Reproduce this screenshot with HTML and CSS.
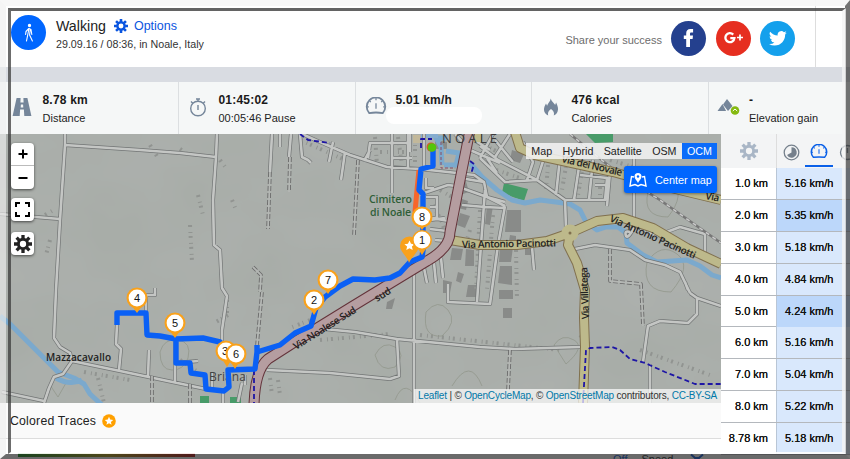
FILE: index.html
```
<!DOCTYPE html>
<html lang="en">
<head>
    <meta charset="UTF-8">
    <meta name="viewport" content="width=device-width, initial-scale=1.0">
    <title>Walking - 29.09.16 / 08:36, in Noale, Italy</title>
    <link rel="stylesheet" href="styles.css">
</head>
<body>

<svg class="defs" width="0" height="0">
    <defs>
        <symbol id="gear" viewBox="0 0 24 24">
            <circle cx="12" cy="12" r="6.2" fill="none" stroke="currentColor" stroke-width="4"/>
            <path d="M12 0v5M12 19v5M0 12h5M19 12h5M3.5 3.5l3.6 3.6M16.9 16.9l3.6 3.6M20.5 3.5l-3.6 3.6M7.1 16.9l-3.6 3.6" stroke="currentColor" stroke-width="4.4"/>
        </symbol>
        <symbol id="gauge" viewBox="0 0 24 20">
            <path d="M4.5 17.8A10.3 10.3 0 1 1 19.5 17.8Q12 16.6 4.5 17.8z" fill="none" stroke="currentColor" stroke-width="2" stroke-linejoin="round"/>
            <path d="M12 7v6M12 1v2.500M2 11h2M20 11h2M5 4.500l1.200 1.200M19 4.500l-1.200 1.200" stroke="currentColor" stroke-width="1.400"/>
        </symbol>
    </defs>
</svg>

<div class="page">
    <header class="header">
        <div class="sport-icon">
            <svg width="14" height="20" viewBox="0 0 14 20" fill="none" stroke="#fff" stroke-width="1.1" stroke-linecap="round" stroke-linejoin="round">
                <circle cx="7.500" cy="2.500" r="1.100" fill="#fff"/>
                <path d="M7 5.500L5.800 11.500L4.500 18M7 5.500l2 1 .8 5M6.800 5.500L4 8.500l-.4 3M8.200 7l-.6 5 2.800 6"/>
            </svg>
        </div>
        <div class="title">
            <div class="title-row">
                <h1>Walking</h1>
                <svg class="gear-blue" width="14" height="14"><use href="#gear"/></svg>
                <a class="options">Options</a>
            </div>
            <p class="date">29.09.16 / 08:36, in Noale, Italy</p>
        </div>
        <div class="share">
            <span class="share-text">Share your success</span>
            <span class="social facebook">
                <svg width="12" height="20" viewBox="0 0 12 20"><path fill="#fff" d="M3.200 19V11H.8V7.600h2.400V5.300C3.200 2.600 4.600 1 7.400 1h2.700v3.400H8.400c-1 0-1.400.5-1.400 1.400v1.800h3L9.600 11H7v8z"/></svg>
            </span>
            <span class="social google">
                <svg width="20" height="14" viewBox="0 0 20 14" fill="none" stroke="#fff"><path stroke-width="2.300" d="M9.200 3.600A4.500 4.500 0 1 0 10.400 7.200H6.300"/><path stroke-width="1.700" d="M13 6.500h6M16 3.500v6"/></svg>
            </span>
            <span class="social twitter">
                <svg width="18" height="18" viewBox="0 0 24 24"><path fill="#fff" d="M23.600 4.900a9 9 0 0 1-2.700.8 4.800 4.800 0 0 0 2.100-2.700c-.9.600-2 1-3.100 1.200a4.900 4.900 0 0 0-8.300 4.500A13.800 13.800 0 0 1 1.600 3.600a4.900 4.900 0 0 0 1.500 6.500c-.8 0-1.500-.2-2.200-.6v.1a4.900 4.900 0 0 0 3.900 4.800c-.7.200-1.500.2-2.200.1a4.900 4.900 0 0 0 4.600 3.400A9.800 9.800 0 0 1 0 19.900a13.900 13.900 0 0 0 7.500 2.200c9.100 0 14.300-7.700 14-14.700a10 10 0 0 0 2.100-2.500z"/></svg>
            </span>
        </div>
    </header>

    <section class="stats">
        <div class="stat first">
            <svg class="stat-icon" width="20" height="20" viewBox="0 0 20 20"><path fill="#75869a" d="M4.600 1h4l-.2 4.500h3.200L11.400 1h4l4 18h-7.100l-.4-6.500H8.100L7.700 19H.6zM8.900 7.500l-.2 3h2.600l-.2-3z"/></svg>
            <div><b>8.78 km</b><span>Distance</span></div>
        </div>
        <div class="stat">
            <svg class="stat-icon" width="20" height="20" viewBox="0 0 20 20" fill="none" stroke="#75869a" stroke-width="1.400"><circle cx="10" cy="11.500" r="7.300"/><path d="M10 8v5M8 2h4M10 2v2.500M3 4.500l2 2M17 4.500l-2 2"/></svg>
            <div><b>01:45:02</b><span>00:05:46 Pause</span></div>
        </div>
        <div class="stat speed">
            <svg class="stat-icon" width="22" height="18"><use href="#gauge"/></svg>
            <div><b>5.01 km/h</b><i class="blank"></i></div>
        </div>
        <div class="stat">
            <svg class="stat-icon" width="20" height="20" viewBox="0 0 20 20"><path fill="#75869a" d="M9.800 1.500c.8 3.500 3.600 4.600 4.300 6.400l1-2.400c1.600 3.600 2.600 6 1.500 9-.6 1.900-2 3.200-3.800 4 .7-2.600 0-4.300-2.800-6.500-2.800 2.200-3.500 3.900-2.800 6.500-2.500-1-4-3-4.200-5.400-.2-2.600 1-4.600 2-6.600l1.100 2.200C6.500 6.500 9.200 5 9.800 1.500z"/></svg>
            <div><b>476 kcal</b><span>Calories</span></div>
        </div>
        <div class="stat last">
            <svg class="stat-icon" width="23" height="20" viewBox="0 0 23 20"><path fill="#75869a" d="M.5 14L5.500 7l3.600 7zM6 7.500L10 2l5.500 7-4.500 5z"/><circle cx="18" cy="13.500" r="4.300" fill="#84b90f"/><path d="M15.800 14l2.200-2 2.200 2" fill="none" stroke="#fff"/></svg>
            <div><b>-</b><span>Elevation gain</span></div>
        </div>
    </section>

    <div class="content">
        <main class="left">
            <div class="map">
                <svg class="map-svg" width="721" height="269" viewBox="0 134 721 269">
                    <defs>
                        <filter id="relief" x="0" y="0" width="100%" height="100%">
                            <feTurbulence type="fractalNoise" baseFrequency="0.012 0.016" numOctaves="3" seed="8"/>
                            <feColorMatrix values="0 0 0 0 .45  0 0 0 0 .46  0 0 0 0 .46  .6 0 0 0 -.12"/>
                        </filter>
                        <path id="roads" d="M65 134v11L60 220L56 290L54 338L60 347L70 353L72 361L63 374L54 377L49 388L44 403M2 392L44 401M72 361L120 371L206 389
                            M65 145L140 150L180 153L216 157M217 134L216 157L213 200L214 245L220 250L222 288L227 296L222 330V345M0 214L60 219
                            M146 314V295H155V288M117 325L116 344L121 349L119 370M149 350L148 376M175 340V383M176 363L198 361
                            M272 134L270 172M280 134V147M291 134L289 157M300 134L302 157L308 160L311 163
                            M302 134L320 142L350 155L387 167L420 169L457 173L474 175L484 182L487 197L505 202M333 142L329 162M345 152L341 180M368 158L370 143H407M370 150L364 161M392 134V193M392 158H412M408 134V170M424 134V168M410 134V152
                            M460 178L484 182M426 178V188H434M424 193L448 185L456 186L487 197L505 206M426 197H437V218H428M430 207H437M430 220L445 218M437 219L449 221M430 229L447 231M435 240L447 241M414 267V403M427 257L442 255
                            M424 268L427 283M434 263L436 283M441 258L443 278M485 190L481 245L477 302M505 206L498 245L490 304L448 302V284M462 205L485 207L505 208
                            M480 158L505 182L537 180L565 200L566 228M493 134L480 158M480 146L498 160L537 180M497 173L487 158M513 162L495 140M510 134L495 157M523 142L533 162L527 180M545 155L537 180M560 158L556 195M580 160L574 200M593 160L589 200M565 200L605 200L607 178L580 175M610 172L607 206M595 185H607
                            M634 150V228M634 228Q628 239 626 236Q624 230 630 232M656 236L680 227L705 234V260M656 236L640 228
                            M575 249L595 245L630 250L645 260L665 265L680 272L690 293M690 293L697 298L721 306M697 298V314L688 323L660 321L648 326L643 362M650 364V403M532 247L534 270M688 290L685 282
                            M314 328L355 332L397 339L480 347L515 349L580 347M397 339L399 376L390 379L330 373L267 370
                            M414 330V340M455 134L470 150L500 163M465 134L490 150M245 385V375M238 402L242 383M212 372V388M223 390V403"/>
                    </defs>
                    <rect y="134" width="721" height="269" fill="#a8ada8"/>
                    <rect y="134" width="721" height="269" filter="url(#relief)"/>

                    <!-- fields and buildings -->
                    <path fill="#489b69" d="M504 183L528 189L524 201L502 193zM586 134H613V142L595 143zM230 397H241V403H230zM200 396H209V403H200z"/>
                    <path fill="#898b89" d="M457 180L465 178L469 192L460 195zM456 197L468 201L466 210L454 207zM460 213L470 216L465 228L457 225zM507 210H521V232H505zM510 235L516 236V241H509zM500 248L513 247L511 262H499zM500 266L512 266V285L498 283zM499 290H513V299H499zM503 308H512V318H503zM487 206L493 206L490 225L485 224zM452 248L463 249L461 260H450zM466 249L474 250V266H465zM443 280L452 282L450 293H443zM468 285H478V297H466zM458 272L464 274L461 283L456 281zM387 302L395 298L392 309H386zM435 140L447 142V149H435zM512 150L524 154L520 163L510 160zM525 248H531V255H525z"/>
                    <path class="houses" d="M300 140L345 160M375 137L377 165M398 137L402 165M415 138V168M380 152H405M448 165L470 170M474 140L500 153M496 170L520 178M548 165L546 190M567 160L562 190M583 165L578 195M600 165V195M440 190L452 197M433 205L442 222M443 226L450 243M470 230L465 246M516 250L517 300M480 210L476 290M493 215L487 290M228 315L216 322M227 300V318M150 145L158 158M180 149L187 154M198 195L203 215M220 160L226 168M190 225L192 262M50 240L46 255M45 215L52 211M232 200L236 210M420 335L560 350M320 340L390 334M580 335L590 345M640 350L710 375M610 160L650 172M180 360L198 372M84 372L130 380M98 378L104 403M270 378L272 395M278 380L280 395M310 320L290 328"/>
                    <g fill="none" stroke="#92978b" stroke-width=".8">
                        <path d="M160 352q4-14 18-12t10 18q-4 12-16 12t-12-18zM375 355q8-15 20-8t0 20q-15 6-20-12zM426 312q12-14 22-2t-6 26q-20 2-16-24zM647 262q14-20 30-8t-6 38q-30 0-24-30zM554 345q8-12 20-5t-8 24zM648 192q10-22 24-10t-4 35q-26 0-20-25zM395 400q10-25 25 3M452 386q18-30 30 0M50 385l8 12 8-14"/>
                    </g>

                    <!-- rivers -->
                    <g fill="none" stroke="#7ba9cd" stroke-width="5" stroke-linejoin="round">
                        <path d="M0 316L10 324L40 354L58 372L74 378L84 384L90 394L103 406M56 378Q70 386 82 380"/>
                        <path d="M470 163L482 177L497 190L512 200L525 203L540 200L556 202L570 204L580 210L586 222L597 230L606 227L618 227L626 233L627 243L643 255L657 262L687 260L700 266L712 275L721 278"/>
                        <path d="M434 134L441 147L442 165M444 165H456L459 153L446 151M438 138H447"/>
                    </g>
                    <path fill="#86add0" d="M421 134H438V138H421z"/>

                    <!-- minor roads -->
                    <use href="#roads" class="road-case"/>
                    <use href="#roads" class="road-fill"/>
                    <path class="track-case" d="M270 172L268 229M290 157L289 192M358 160L354 235M262 292L257 345M253 267L261 275L260 292M152 376V403M190 384V403M610 249V281L641 284L643 326M510 350L508 390"/>
                    <path class="track" d="M270 172L268 229M290 157L289 192M358 160L354 235M262 292L257 345M253 267L261 275L260 292M152 376V403M190 384V403M610 249V281L641 284L643 326M510 350L508 390"/>
                    <path d="M570 134L620 175L660 200L721 243" fill="none" stroke="#777" stroke-width="2.500"/>
                    <path d="M570 134L620 175L660 200L721 243" fill="none" stroke="#c9c9c9" stroke-width="1.500" stroke-dasharray="4 4"/>

                    <!-- secondary roads -->
                    <path class="sec-case" d="M450 240L480 245L517 245L547 241L570 233L597 221L623 218L653 228L687 248L721 264M570 233L568 245L577 263L585 290L584 318L585 347L583 403M515 132L520 148L535 155L613 172L667 187L721 200M477 132V142"/>
                    <path class="sec-fill" d="M450 240L480 245L517 245L547 241L570 233L597 221L623 218L653 228L687 248L721 264M570 233L568 245L577 263L585 290L584 318L585 347L583 403M515 132L520 148L535 155L613 172L667 187L721 200M477 132V142"/>
                    <circle cx="570" cy="233" r="8.500" fill="#bdb98b"/>
                    <circle cx="570" cy="233" r="1.500" fill="#80704e"/>
                    <rect x="413" y="135" width="7" height="8" fill="#c2b89a"/>

                    <!-- Via Noalese -->
                    <path class="main-case" d="M470 130L461 175L450 232Q450 248 427 261L353 306L293 343L268 359Q255 370 254 405"/>
                    <path class="main-fill" d="M470 130L461 175L450 232Q450 248 427 261L353 306L293 343L268 359Q255 370 254 405"/>
                    <path class="dashed" d="M254 370L254 403M300 134L308 140L330 143M421 148V139H432M470 161L474 164L471 174M583 403L586 350L590 348L612 347L620 350L630 359L645 363L665 372L695 384L721 384"/>
                    <path d="M441 142V168H455" fill="none" stroke="#8a4a60" stroke-width="1" stroke-dasharray="3 2"/>

                    <!-- labels -->
                    <g class="label">
                        <text x="442" y="142.500" class="town" textLength="55">NOALE</text>
                        <text x="369" y="203" class="green" textLength="43">Cimitero</text>
                        <text x="370" y="216" class="green" textLength="41">di Noale</text>
                        <text x="46" y="361" textLength="65">Mazzacavallo</text>
                        <text x="209" y="381" class="village" textLength="37">Briana</text>
                        <text transform="translate(462 248) rotate(-1)" textLength="94">Via Antonio Pacinotti</text>
                        <text transform="translate(561 162) rotate(13)" textLength="62">Via dei Novale</text>
                        <text transform="translate(705 199) rotate(10)" textLength="14">Via</text>
                        <text transform="translate(609 221) rotate(24)" textLength="93">Via Antonio Pacinotti</text>
                        <text transform="translate(589 319) rotate(-92)" textLength="52">Via Villatega</text>
                        <text transform="translate(296 350) rotate(-32)" textLength="72">Via Noalese Sud</text>
                        <text transform="translate(377 302) rotate(-32)">sud</text>
                    </g>

                    <!-- recorded track -->
                    <path d="M419 170L417 190L415 212" fill="none" stroke="#f7662a" stroke-width="5"/>
                    <path d="M433 149V166L421 169L419 190L423 194V250L422 257L410 262L400 273L390 278L375 280L353 279L340 286L325 297L316 308L311 326L295 333L280 345L257 352L255 369L228 370L229 387L224 391L206 389L205 375L191 373L190 363H176V338M257 352V345M228 350L220 342L203 338L176 339L160 336L147 335L146 313H117V325" class="route"/>
                    <circle cx="431" cy="147" r="4.500" fill="#d35b2c"/>
                    <circle cx="432" cy="147.500" r="4.300" fill="#53c60a"/>

                    <g class="pins">
                        <path d="M409 263C408 257 400 252 400 246a9.500 9.500 0 0 1 19 0C419 252 411 257 409 263z"/>
                        <path fill="#fff" d="M409.500 240.500l1.500 3.300 3.600.4-2.700 2.400.8 3.500-3.200-1.800-3.200 1.800.8-3.500-2.700-2.400 3.600-.4z"/>
                        <path d="M422 230l-5-7h10z"/><circle cx="422" cy="217" r="10.500"/><circle cx="422" cy="217" r="8.400" fill="#fff"/><text x="422" y="221">8</text>
                        <path d="M422 255l-5-8h10z"/><circle cx="422" cy="240" r="10"/><circle cx="422" cy="240" r="8.400" fill="#fff"/><text x="422" y="244">1</text>
                        <path d="M328 294l-5-7h10z"/><circle cx="328" cy="280" r="10.500"/><circle cx="328" cy="280" r="8.400" fill="#fff"/><text x="328" y="284">7</text>
                        <path d="M314 315l-5-8h10z"/><circle cx="314" cy="300" r="10.500"/><circle cx="314" cy="300" r="8.400" fill="#fff"/><text x="314" y="304">2</text>
                        <path d="M137 313l-5-7h10z"/><circle cx="137" cy="298" r="10.500"/><circle cx="137" cy="298" r="8.400" fill="#fff"/><text x="137" y="302">4</text>
                        <path d="M175 338l-5-7h10z"/><circle cx="175" cy="323" r="10.500"/><circle cx="175" cy="323" r="8.400" fill="#fff"/><text x="175" y="327">5</text>
                        <path d="M227 367l-5-8h10z"/><circle cx="226" cy="351" r="10.500"/><circle cx="226" cy="351" r="8.400" fill="#fff"/><text x="225" y="355">3</text>
                        <path d="M235 369l-5-8h10z"/><circle cx="236" cy="354" r="10.500"/><circle cx="236" cy="354" r="8.400" fill="#fff"/><text x="236" y="358">6</text>
                    </g>
                </svg>

                <div class="map-controls">
                    <div class="zoom">
                        <div class="btn plus"><svg width="10" height="10"><path d="M5 .5v9M.5 5h9" stroke="#000" stroke-width="2"/></svg></div>
                        <div class="btn"><svg width="10" height="10"><path d="M.5 5h9" stroke="#000" stroke-width="2"/></svg></div>
                    </div>
                    <div class="btn single"><svg width="15" height="15" viewBox="0 0 15 15" fill="none" stroke="#000" stroke-width="2"><path d="M1 5V1h4M10 1h4v4M14 10v4h-4M5 14H1v-4"/></svg></div>
                    <div class="btn single"><svg width="18" height="18"><use href="#gear"/></svg></div>
                </div>

                <div class="map-right">
                    <div class="layers">
                        <span>Map</span><span>Hybrid</span><span>Satellite</span><span>OSM</span><span class="active">OCM</span>
                    </div>
                    <div class="center-map">
                        <svg width="18" height="16" viewBox="0 0 18 16" fill="none" stroke="#fff" stroke-width="1.400"><path d="M5 5L2.500 4.500 1 14l5-1.500 3 1.500 3-1.500 5 1.500-1.500-9.500L13 5"/><path fill="#fff" stroke="none" d="M9 11C8 8.500 5.500 7 5.500 4.500a3.500 3.500 0 0 1 7 0C12.500 7 10 8.500 9 11z"/><circle cx="9" cy="4.500" r="1.200" fill="#06f" stroke="none"/></svg>
                        <span>Center map</span>
                    </div>
                </div>
                <div class="attribution"><a>Leaflet</a> | © <a>OpenCycleMap</a>, © <a>OpenStreetMap</a> contributors, <a>CC-BY-SA</a></div>
            </div>

            <div class="traces">
                <span>Colored Traces</span>
                <svg width="14" height="14" viewBox="0 0 14 14"><circle cx="7" cy="7" r="6.800" fill="#ffa000"/><path fill="#fff" d="M7 2.800l1.200 2.800 3 .3-2.300 2 .7 2.900L7 9.300l-2.600 1.500.7-2.900-2.300-2 3-.3z"/></svg>
            </div>
            <div class="chart-head">
                <div class="scale"></div>
                <a class="off">Off</a>
                <span>Speed</span>
                <svg width="14" height="10" viewBox="0 0 14 10"><path d="M1 1.500l6 5 6-5M3 8l4-3 4 3" fill="none" stroke="#0a55d8" stroke-width="2"/></svg>
            </div>
        </main>

        <aside class="laps">
            <div class="laps-head">
                <div class="laps-gear"><svg width="18" height="18"><use href="#gear"/></svg></div>
                <div class="tabs">
                    <div class="tab"><svg width="17" height="17" viewBox="0 0 17 17"><circle cx="8.500" cy="8.500" r="7.300" fill="none" stroke="#75808c" stroke-width="1.300"/><path fill="#75808c" d="M8.500 8.500V3.300a5.200 5.200 0 1 1-4.500 7.800z"/></svg></div>
                    <div class="tab selected"><svg width="18" height="15"><use href="#gauge"/></svg></div>
                    <div class="tab"><svg width="17" height="17" viewBox="0 0 17 17" fill="none" stroke="#75808c" stroke-width="1.300"><circle cx="8.500" cy="8.500" r="7"/><path d="M8.500 4v5"/></svg></div>
                </div>
            </div>
            <div class="row"><span>1.0 km</span><b>5.16 km/h</b></div>
            <div class="row fast"><span>2.0 km</span><b>5.35 km/h</b></div>
            <div class="row"><span>3.0 km</span><b>5.18 km/h</b></div>
            <div class="row"><span>4.0 km</span><b>4.84 km/h</b></div>
            <div class="row fast"><span>5.0 km</span><b>4.24 km/h</b></div>
            <div class="row"><span>6.0 km</span><b>5.16 km/h</b></div>
            <div class="row"><span>7.0 km</span><b>5.04 km/h</b></div>
            <div class="row"><span>8.0 km</span><b>5.22 km/h</b></div>
            <div class="row"><span>8.78 km</span><b>5.18 km/h</b></div>
        </aside>
    </div>

    <div class="frame"></div>
</div>

</body>
</html>
```
FILE: styles.css
```
* {
    box-sizing: border-box;
}
body {
    margin: 0;
    font-family: "Liberation Sans", Arial, sans-serif;
    font-size: 12px;
    color: #222;
    background: #fff;
}
.defs {
    position: absolute;
}
svg {
    display: block;
    flex: none;
}
.page {
    position: relative;
    width: 850px;
    height: 459px;
    overflow: hidden;
}
.header {
    display: flex;
    height: 67px;
    margin-right: 34px;
    padding: 15px 20px 0 11px;
    border-right: 1px solid #ddd;
}
.sport-icon {
    display: flex;
    align-items: center;
    justify-content: center;
    width: 35px;
    height: 35px;
    border-radius: 50%;
    background: #06f;
}
.title {
    margin-left: 10px;
    padding-top: 2px;
}
.title-row {
    display: flex;
    align-items: center;
    height: 18px;
}
h1 {
    margin: 0;
    font-size: 14.2px;
    font-weight: normal;
}
.gear-blue {
    margin: 0 6px 0 8px;
    color: #0a55e0;
}
.options {
    color: #0a55e0;
    font-size: 12.5px;
}
.date {
    margin: 3px 0 0;
    font-size: 10.7px;
    line-height: 12px;
    color: #333;
}
.share {
    display: flex;
    align-items: center;
    height: 46px;
    margin-left: auto;
    gap: 10px;
}
.share-text {
    margin-top: 4px;
    margin-right: -1px;
    font-size: 11px;
    color: #6d6d6d;
}
.social {
    display: flex;
    align-items: center;
    justify-content: center;
    width: 35px;
    height: 35px;
    border-radius: 50%;
}
.facebook {
    background: #24408e;
}
.google {
    background: #e62e20;
}
.twitter {
    background: #14a0ec;
    margin-left: -1px;
}
.stats {
    display: grid;
    grid-template-columns: 179px 176.5px 176.5px 177px 141px;
    height: 67px;
    border-top: 15px solid #d9dce2;
    background: #f5f7f7;
}
.stat {
    display: flex;
    align-items: flex-start;
    padding: 11px 0 0 9px;
    border-right: 1px solid #dcdfe1;
}
.stat.first {
    padding-left: 12px;
}
.stat.last {
    border-right: 0;
    padding-left: 8px;
}
.stat-icon {
    margin-top: 4px;
    color: #75869a;
}
.stat div {
    margin-left: 10.5px;
}
.stat.speed div {
    margin-left: 9px;
}
.stat.last div {
    margin-left: 9px;
}
.stat b, .stat span {
    display: block;
    height: 17px;
    line-height: 15px;
}
.stat b {
    color: #1a1a1a;
    letter-spacing: 0.2px;
}
.stat span {
    font-size: 11px;
    line-height: 17px;
}
.blank {
    display: block;
    width: 96px;
    height: 17px;
    margin-left: -10px;
    margin-top: -3px;
    border-radius: 8px;
    background: #fff;
}
.content {
    display: flex;
    height: 325px;
}
.left {
    width: 721px;
}
.map {
    position: relative;
    height: 269px;
}
.road-case, .road-fill, .sec-case, .sec-fill, .main-case, .main-fill, .route, .dashed, .track, .track-case, .houses {
    fill: none;
    stroke-linejoin: round;
}
.road-case {
    stroke: #727575;
    stroke-width: 4px;
}
.road-fill {
    stroke: #c4c6c4;
    stroke-width: 2.6px;
}
.track-case {
    stroke: #6b6b6b;
    stroke-width: 3.6px;
    stroke-dasharray: 5 2;
}
.track {
    stroke: #b4b7b4;
    stroke-width: 1.8px;
}
.houses {
    stroke: #919491;
    stroke-width: 4px;
    stroke-dasharray: 2 5 1 3;
}
.sec-case {
    stroke: #80704e;
    stroke-width: 10px;
}
.sec-fill {
    stroke: #bdb98b;
    stroke-width: 8px;
}
.main-case {
    stroke: #63333a;
    stroke-width: 11px;
}
.main-fill {
    stroke: #b59da0;
    stroke-width: 9px;
}
.dashed {
    stroke: #1e16a5;
    stroke-width: 1.8px;
    stroke-dasharray: 5 3;
}
.route {
    stroke: #0a60f5;
    stroke-width: 5.4px;
}
.label {
    font-family: "Open Sans", "Noto Sans", sans-serif;
    font-size: 10px;
    font-weight: 600;
    fill: #222;
}
.label .town {
    font-size: 13px;
    font-weight: 400;
    fill: #3c3c3c;
}
.label .green {
    font-size: 10.5px;
    fill: #2f5e38;
}
.label .village {
    font-size: 12px;
    font-weight: 400;
    fill: #444;
}
.pins {
    fill: #f9a11b;
}
.pins text {
    font-size: 11px;
    fill: #111;
    text-anchor: middle;
}
.map-controls {
    position: absolute;
    left: 11px;
    top: 9px;
}
.zoom {
    height: 46px;
    margin-bottom: 9px;
    border-radius: 4px;
    background: #fff;
    box-shadow: 0 1px 3px rgba(0, 0, 0, 0.6);
}
.btn {
    display: flex;
    align-items: center;
    justify-content: center;
    width: 23px;
    height: 23px;
}
.plus {
    border-bottom: 1px solid #bbb;
}
.single {
    margin-bottom: 11px;
    border-radius: 4px;
    background: #fff;
    box-shadow: 0 1px 3px rgba(0, 0, 0, 0.6);
}
.map-right {
    position: absolute;
    top: 9px;
    right: 4px;
    display: flex;
    flex-direction: column;
    align-items: flex-end;
}
.layers {
    display: flex;
    height: 16px;
    line-height: 16px;
    font-size: 10.7px;
    background: rgba(245, 245, 245, 0.85);
}
.layers span {
    padding: 0 5.2px;
}
.layers .active {
    background: #0a6bfa;
    color: #fff;
}
.center-map {
    display: flex;
    align-items: center;
    gap: 8px;
    width: 93px;
    height: 27px;
    margin-top: 7px;
    padding-left: 5px;
    border-radius: 3px;
    background: #06f;
    color: #fff;
    font-size: 10.9px;
    white-space: nowrap;
    box-shadow: 0 1px 3px rgba(0, 0, 0, 0.4);
}
.attribution {
    position: absolute;
    right: 0;
    bottom: 0;
    height: 14px;
    padding: 0 4px;
    line-height: 14px;
    font-size: 10px;
    letter-spacing: -0.19px;
    color: #333;
    background: rgba(255, 255, 255, 0.7);
}
.attribution a {
    color: #0078a8;
}
.traces {
    display: flex;
    align-items: center;
    gap: 6px;
    height: 36px;
    padding-left: 10px;
    border-bottom: 1px solid #ddd;
    background: #fafafa;
    font-size: 12.3px;
    letter-spacing: 0.2px;
}
.chart-head {
    display: flex;
    align-items: flex-start;
    height: 20px;
    padding: 14px 16px 0 18px;
    font-size: 11px;
}
.scale {
    width: 177px;
    height: 4px;
    margin-right: 418px;
    background: linear-gradient(to right, #0c8a1a, #a8940c 50%, #b00c0c);
}
.off {
    margin-right: 14px;
    color: #0a55d8;
}
.chart-head svg {
    margin-left: 17px;
}
.laps {
    width: 129px;
    background: #fff;
}
.laps-head {
    display: flex;
    height: 34px;
    overflow: hidden;
    background: #f3f4f5;
}
.laps-gear {
    display: flex;
    align-items: center;
    justify-content: center;
    flex: none;
    width: 56px;
    border-right: 1px solid #ddd;
    color: #a9b6c6;
}
.tabs {
    display: flex;
}
.tab {
    display: flex;
    align-items: center;
    justify-content: center;
    flex: none;
    width: 28px;
    height: 33px;
    padding-top: 3px;
    color: #0a60e8;
}
.selected {
    border-bottom: 2px solid #0a60e8;
}
.row {
    display: grid;
    grid-template-columns: 55px 74px;
    height: 31.9px;
    border-bottom: 1px solid #b4b8bd;
    font-size: 11px;
    line-height: 31px;
    color: #111;
    text-shadow: 0 0 0.5px #111;
}
.row span {
    text-align: right;
    padding-right: 8px;
}
.row b {
    border-left: 1px solid #b9c6d6;
    padding-left: 8px;
    font-weight: normal;
    background: #d9e8fc;
}
.row.fast b {
    background: #bcd7fa;
}
/* bevelled picture frame over the whole page */
.frame {
    position: absolute;
    inset: 0;
    border-style: solid;
    border-width: 6px 5px 5px 6px;
    border-color: rgba(247, 247, 247, 0.95) rgba(45, 45, 45, 0.66) rgba(35, 35, 35, 0.68) rgba(240, 240, 240, 0.65);
    pointer-events: none;
}
.frame::after {
    content: "";
    position: absolute;
    inset: 2px -1px 0 2px;
    border-style: solid;
    border-width: 3px 4px 2px 3px;
    border-color: rgba(60, 60, 60, 0.8) rgba(245, 245, 245, 0.75) rgba(255, 255, 255, 0.9) rgba(60, 60, 60, 0.75);
}
```
